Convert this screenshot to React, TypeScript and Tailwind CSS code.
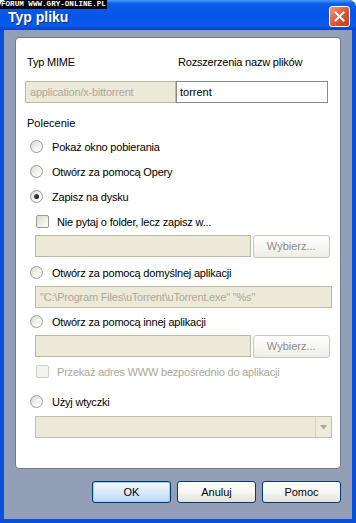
import React from "react";

const FONT = { fontFamily: '"Liberation Sans", Arial, sans-serif' };

function Radio({ checked, label }: { checked?: boolean; label: string }) {
  return (
    <div className="flex h-[25px] items-center pl-[5px]">
      <span className="flex h-[13px] w-[13px] items-center justify-center rounded-full border border-[#9c9c96] bg-gradient-to-br from-[#d6d5ce] via-[#f2f2ee] to-white">
        {checked && (
          <span className="h-[5px] w-[5px] rounded-full bg-gradient-to-br from-[#5a5a5a] to-[#111]" />
        )}
      </span>
      <span className="ml-[9px] text-[11px] leading-[14px] tracking-[-0.2px] text-black">{label}</span>
    </div>
  );
}

function Check({ label, disabled }: { label: string; disabled?: boolean }) {
  return (
    <div className="flex h-[25px] items-center pl-[11px]">
      <span
        className={
          disabled
            ? "h-[13px] w-[13px] rounded-[2px] border border-[#cfcdc4] bg-[#f4f3ef]"
            : "h-[13px] w-[13px] rounded-[2px] border border-[#9c9c96] bg-gradient-to-br from-[#dcdbd4] to-white"
        }
      />
      <span
        className={
          "ml-[8px] text-[11px] leading-[14px] tracking-[-0.2px] " +
          (disabled ? "text-[#aca899]" : "text-black")
        }
      >
        {label}
      </span>
    </div>
  );
}

function Field({ value, className }: { value?: string; className?: string }) {
  return (
    <div
      className={
        "flex h-[22px] items-center border border-[#bdb9a6] bg-[#ece9d8] px-[4px] text-[11px] tracking-[-0.2px] text-[#aca899] " +
        (className ?? "")
      }
    >
      {value}
    </div>
  );
}

function Browse() {
  return (
    <div className="flex h-[23px] w-[78px] items-center justify-center rounded-[3px] border border-[#c9c7ba] bg-gradient-to-b from-white to-[#eeede7] text-[11px] text-[#8e8c84]">
      Wybierz...
    </div>
  );
}

function DlgButton({ label, primary }: { label: string; primary?: boolean }) {
  return (
    <div
      className={
        "flex h-[22px] w-[79px] items-center justify-center rounded-[3px] border border-[#003c74] text-[11px] text-black " +
        (primary
          ? "bg-gradient-to-b from-[#f4f9ff] via-[#dcebfb] to-[#b9d4f3] shadow-[inset_0_0_0_1px_#a9cbf1]"
          : "bg-gradient-to-b from-white via-[#f6f6f3] to-[#e3e2da]")
      }
    >
      {label}
    </div>
  );
}

export default function App() {
  return (
    <div style={FONT} className="relative flex h-[523px] w-[356px] flex-col overflow-hidden rounded-t-[7px] bg-[#0a4fdc]">
      {/* title bar */}
      <div className="flex h-[30px] shrink-0 items-center justify-between bg-[linear-gradient(to_bottom,#4a9bff_0%,#0e5fea_12%,#0455e9_50%,#0a5be9_85%,#0842c8_100%)] pl-[8px] pr-[6px]">
        <span className="mt-[4px] text-[14px] font-bold text-white [text-shadow:1px_1px_0_#0a2a8a]">
          Typ pliku
        </span>
        <span className="mt-[2px] flex h-[21px] w-[21px] items-center justify-center rounded-[3px] border border-white bg-gradient-to-br from-[#ec9a7c] via-[#dc5a36] to-[#c23d18]">
          <svg width="11" height="11" viewBox="0 0 11 11">
            <path d="M1.5 1.5 L9.5 9.5 M9.5 1.5 L1.5 9.5" stroke="white" strokeWidth="2" strokeLinecap="square" />
          </svg>
        </span>
      </div>

      {/* watermark */}
      <div
        className="absolute left-0 top-0 flex h-[9px] w-[107px] items-center bg-black pl-[1px] text-[7.6px] font-bold leading-none text-white"
        style={{ fontFamily: '"Liberation Mono", monospace' }}
      >
        FORUM WWW.GRY-ONLINE.PL
      </div>

      {/* client area */}
      <div className="mx-[4px] mb-[4px] flex flex-1 flex-col bg-[#939fb6] px-[11px] pt-[7px]">
        <div className="h-[432px] rounded-[4px] border border-[#6f7a8e] bg-white pl-[9px] pr-[10px] pt-[17px]">
          <div className="flex text-[11px] leading-[14px] tracking-[-0.2px] text-black">
            <span className="ml-[2px] w-[150px]">Typ MIME</span>
            <span className="ml-[1px]">Rozszerzenia nazw plików</span>
          </div>
          <div className="mt-[12px] flex">
            <Field value="application/x-bittorrent" className="w-[151px]" />
            <div className="flex h-[22px] w-[152px] items-center border border-[#8c8c8c] bg-white px-[3px] text-[11px] text-black">
              torrent
            </div>
          </div>
          <div className="ml-[2px] mt-[13px] text-[11px] leading-[14px] text-black">Polecenie</div>

          <div className="mt-[4px]">
            <Radio label="Pokaż okno pobierania" />
            <Radio label="Otwórz za pomocą Opery" />
            <Radio checked label="Zapisz na dysku" />
            <Check label="Nie pytaj o folder, lecz zapisz w..." />
          </div>
          <div className="ml-[10px] mt-[1px] flex gap-[2px]">
            <Field className="w-[217px]" />
            <Browse />
          </div>
          <div className="mt-[2px]">
            <Radio label="Otwórz za pomocą domyślnej aplikacji" />
          </div>
          <div className="ml-[10px] mt-[1px]">
            <Field value={'"C:\\Program Files\\uTorrent\\uTorrent.exe" "%s"'} className="w-[297px]" />
          </div>
          <div className="mt-[1px]">
            <Radio label="Otwórz za pomocą innej aplikacji" />
          </div>
          <div className="ml-[10px] mt-[1px] flex gap-[2px]">
            <Field className="w-[217px]" />
            <Browse />
          </div>
          <div className="mt-[1px]">
            <Check disabled label="Przekaż adres WWW bezpośrednio do aplikacji" />
          </div>
          <div className="mt-[5px]">
            <Radio label="Użyj wtyczki" />
          </div>
          <div className="ml-[10px] mt-[2px] flex h-[22px] w-[297px] border border-[#c4c0ad] bg-[#ece9d8]">
            <div className="flex-1" />
            <div className="flex w-[16px] items-center justify-center border-l border-[#d6d3c4] bg-[#eeebdd]">
              <svg width="7" height="5" viewBox="0 0 7 5">
                <path d="M0 0 H7 L3.5 4.5 Z" fill="#a9a79c" />
              </svg>
            </div>
          </div>
        </div>

        <div className="mt-[12px] flex justify-end gap-[6px]">
          <DlgButton primary label="OK" />
          <DlgButton label="Anuluj" />
          <DlgButton label="Pomoc" />
        </div>
      </div>
    </div>
  );
}
